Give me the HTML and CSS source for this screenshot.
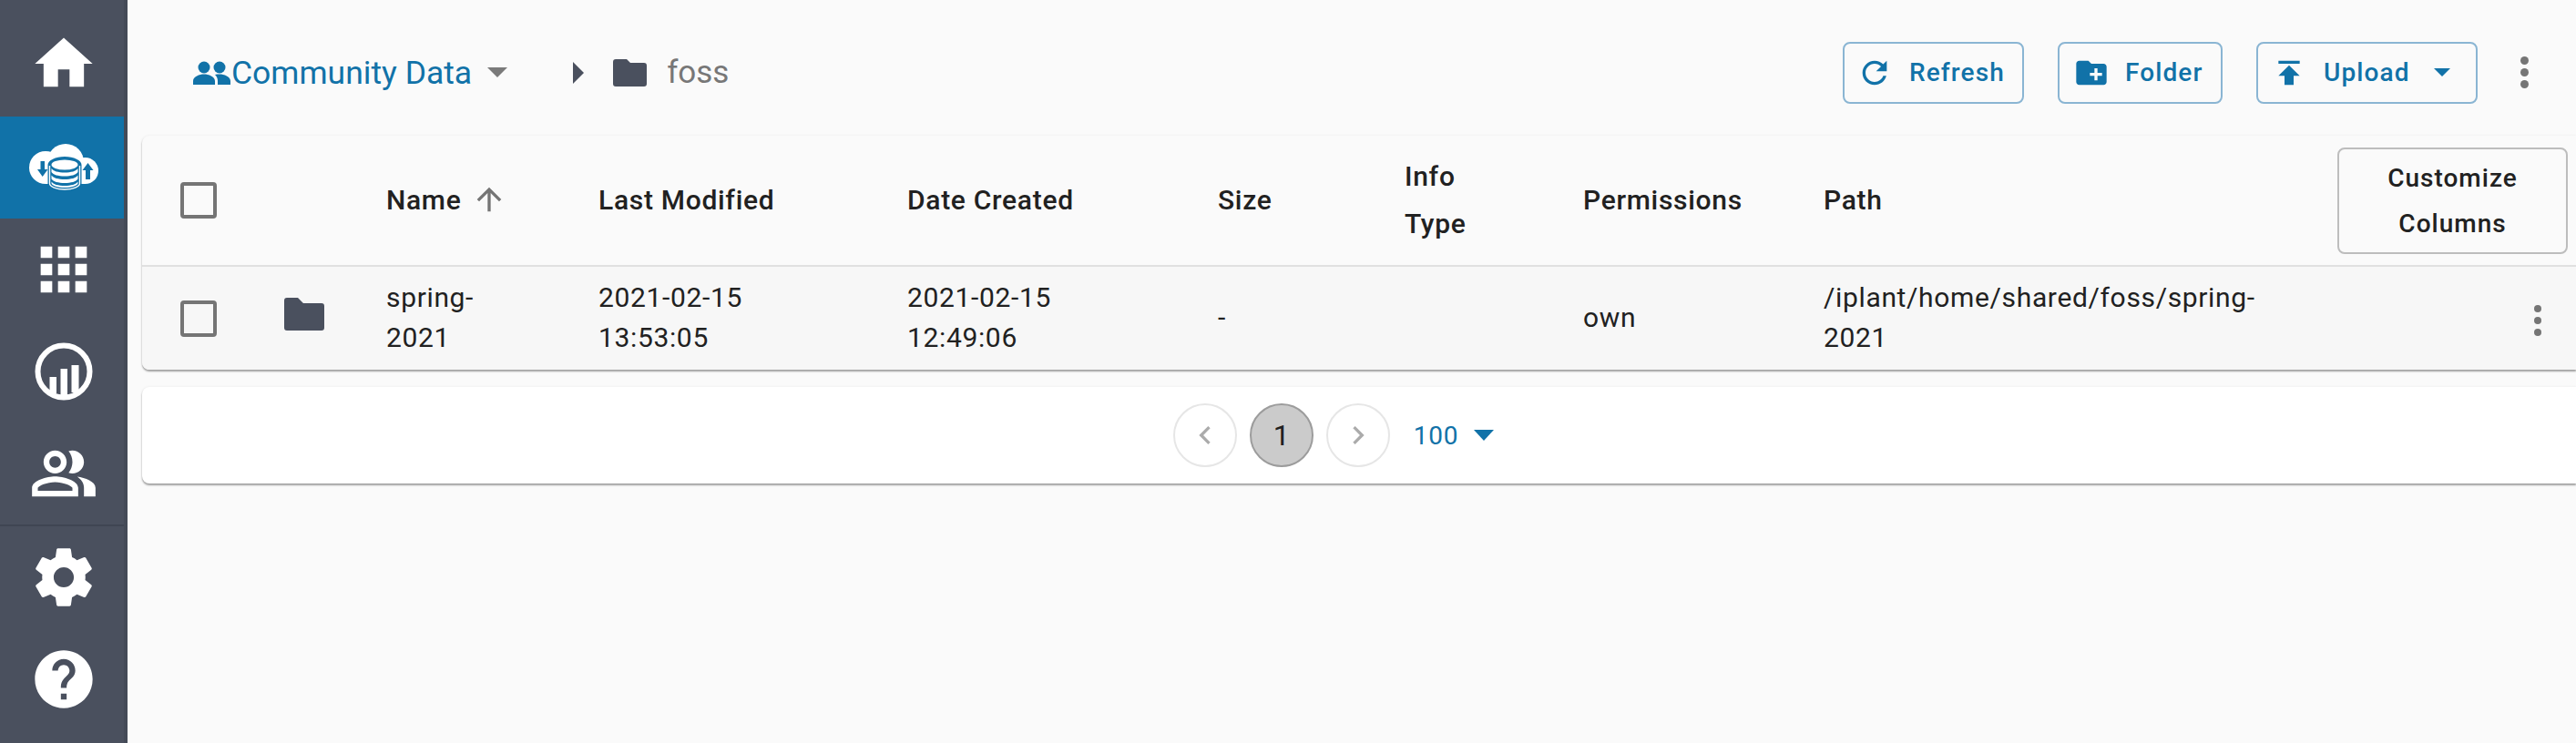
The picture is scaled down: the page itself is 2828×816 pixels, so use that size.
FILE: index.html
```html
<!DOCTYPE html>
<html lang="en">
<head>
    <meta charset="UTF-8">
    <meta name="viewport" content="width=device-width, initial-scale=1.0">
    <title>Community Data</title>
    <link rel="stylesheet" href="styles.css">
</head>
<body>
    <!-- Side navigation -->
    <nav class="sidebar">
        <a href="#" class="nav-item nav-home">
            <svg class="nav-icon" viewBox="0 0 24 24"><path d="M10 20v-6h4v6h5v-8h3L12 3 2 12h3v8z"/></svg>
        </a>
        <a href="#" class="nav-item active">
            <svg class="nav-data" viewBox="0 0 80 56">
                <circle cx="20" cy="28" r="18" fill="#fff"/>
                <circle cx="42" cy="22" r="20" fill="#fff"/>
                <circle cx="63.5" cy="31.5" r="14.5" fill="#fff"/>
                <rect x="20" y="30" width="44" height="16" fill="#fff"/>
                <path d="M14.500 21h4.500v9h3.500l-5.800 8-5.700-8h3.500z" fill="#1172a8"/>
                <path d="M64 41v-10h-3.500l6-8 6 8h-3.500v10z" fill="#1172a8"/>
                <path d="M22.500 25c0-5 8.500-9 18.500-9s18.500 4 18.500 9v21c0 5-8.500 9-18.500 9s-18.500-4-18.500-9z" fill="#1172a8"/>
                <path d="M24.500 26v19.500c0 3.500 7.500 6.500 16.500 6.500s16.500-3 16.500-6.500V26" fill="none" stroke="#fff" stroke-width="1.400"/>
                <ellipse cx="41" cy="25" rx="14.500" ry="5.500" fill="#fff"/>
                <path d="M26.500 29c2 3 7.500 4.500 14.500 4.500s12.500-1.500 14.500-4.500v4c-2 3-7.500 4.500-14.500 4.500s-12.500-1.500-14.500-4.500z" fill="#fff"/>
                <path d="M26.500 36.500c2 3 7.500 4.500 14.500 4.500s12.500-1.500 14.500-4.500v4c-2 3-7.500 4.500-14.500 4.500s-12.500-1.500-14.500-4.500z" fill="#fff"/>
                <path d="M26.500 43.500c2 3 7.500 4.500 14.500 4.500s12.500-1.500 14.500-4.500v2c-1 2.500-6.500 4.500-14.500 4.500s-13.500-2-14.500-4.500z" fill="#fff"/>
            </svg>
        </a>
        <a href="#" class="nav-item">
            <svg class="nav-icon" viewBox="0 0 24 24"><path d="M4 8h4V4H4v4zm6 12h4v-4h-4v4zm-6 0h4v-4H4v4zm0-6h4v-4H4v4zm6 0h4v-4h-4v4zm6-10v4h4V4h-4zm-6 4h4V4h-4v4zm6 6h4v-4h-4v4zm0 6h4v-4h-4v4z"/></svg>
        </a>
        <a href="#" class="nav-item">
            <svg class="nav-analytics" viewBox="0 0 66 66">
                <circle cx="33" cy="33" r="28.500" fill="none" stroke="#fff" stroke-width="6"/>
                <path d="M17.500 39H25v18h-7.500zM29.500 30H37v30h-7.500zM41.500 26H49.500v30h-8z" fill="#fff"/>
            </svg>
        </a>
        <a href="#" class="nav-item">
            <svg class="nav-icon" viewBox="0 0 24 24"><path d="M16.670 13.130C18.040 14.060 19 15.320 19 17v3h4v-3c0-2.180-3.570-3.470-6.330-3.870zM15 12c2.210 0 4-1.790 4-4s-1.790-4-4-4c-.47 0-.91.1-1.330.24C14.500 5.270 15 6.580 15 8s-.5 2.730-1.330 3.760c.42.14.86.24 1.330.24zM9 12c2.210 0 4-1.790 4-4s-1.790-4-4-4-4 1.790-4 4 1.790 4 4 4zm0-6c1.100 0 2 .9 2 2s-.9 2-2 2-2-.9-2-2 .9-2 2-2zM9 13c-2.670 0-8 1.340-8 4v3h16v-3c0-2.660-5.330-4-8-4zm6 5H3v-.99C3.200 16.290 6.300 15 9 15s5.800 1.290 6 2v1z"/></svg>
        </a>
        <div class="nav-divider"></div>
        <a href="#" class="nav-item">
            <svg class="nav-icon" viewBox="0 0 24 24"><path d="M19.430 12.980c.04-.32.07-.64.07-.98s-.03-.66-.07-.98l2.110-1.650c.19-.15.24-.42.12-.64l-2-3.460c-.12-.22-.39-.3-.61-.22l-2.490 1c-.52-.4-1.080-.73-1.690-.98l-.38-2.650C14.460 2.180 14.250 2 14 2h-4c-.25 0-.46.18-.49.42l-.38 2.650c-.61.25-1.170.59-1.690.98l-2.490-1c-.23-.09-.49 0-.61.22l-2 3.460c-.13.22-.07.49.12.64l2.110 1.650c-.04.32-.07.65-.07.98s.03.66.07.98l-2.110 1.650c-.19.15-.24.42-.12.64l2 3.460c.12.22.39.3.61.22l2.490-1c.52.4 1.080.73 1.690.98l.38 2.650c.03.24.24.42.49.42h4c.25 0 .46-.18.49-.42l.38-2.650c.61-.25 1.170-.59 1.690-.98l2.490 1c.23.09.49 0 .61-.22l2-3.460c.12-.22.07-.49-.12-.64l-2.110-1.650zM12 15.500c-1.930 0-3.500-1.570-3.500-3.500s1.570-3.500 3.500-3.500 3.500 1.570 3.500 3.500-1.570 3.500-3.500 3.500z"/></svg>
        </a>
        <a href="#" class="nav-item">
            <svg class="nav-icon" viewBox="0 0 24 24"><path d="M12 2C6.480 2 2 6.480 2 12s4.480 10 10 10 10-4.480 10-10S17.520 2 12 2zm1 17h-2v-2h2v2zm2.070-7.750l-.9.92C13.450 12.900 13 13.500 13 15h-2v-.5c0-1.100.45-2.100 1.170-2.830l1.240-1.260c.37-.36.59-.86.59-1.410 0-1.100-.9-2-2-2s-2 .9-2 2H8c0-2.210 1.790-4 4-4s4 1.790 4 4c0 .88-.36 1.680-.93 2.250z"/></svg>
        </a>
    </nav>

    <main class="content">
        <!-- Toolbar -->
        <div class="toolbar">
            <div class="crumbs">
                <svg class="group-icon" viewBox="0 0 41 26"><circle cx="12" cy="7" r="6.500"/><circle cx="29" cy="7" r="6.500"/><path d="M0 26v-4c0-5 7-7.500 12-7.500s12 2.500 12 7.500v4zM27 26v-4c0-3-1-5-3-7 1.500-.4 3.500-.5 5-.5 5 0 12 2.500 12 7.500v4z"/></svg>
                <span class="root-name">Community Data</span>
                <span class="caret caret-grey"></span>
                <span class="crumb-sep"></span>
                <svg class="crumb-folder" viewBox="0 0 37 30"><path d="M3 0h12l4 4h15a3 3 0 0 1 3 3v20a3 3 0 0 1-3 3H3a3 3 0 0 1-3-3V3a3 3 0 0 1 3-3z"/></svg>
                <span class="crumb-name">foss</span>
            </div>
            <div class="actions">
                <button class="btn btn-refresh">
                    <svg class="btn-icon" viewBox="0 0 24 24"><path d="M17.650 6.350C16.200 4.900 14.210 4 12 4c-4.420 0-7.990 3.580-7.990 8s3.570 8 7.990 8c3.730 0 6.840-2.550 7.730-6h-2.080c-.82 2.330-3.040 4-5.650 4-3.310 0-6-2.690-6-6s2.690-6 6-6c1.660 0 3.140.69 4.220 1.780L13 11h7V4l-2.350 2.350z"/></svg>
                    Refresh
                </button>
                <button class="btn btn-folder">
                    <svg class="btn-icon" viewBox="0 0 24 24"><path d="M20 6h-8l-2-2H4c-1.110 0-1.990.89-1.990 2L2 18c0 1.110.89 2 2 2h16c1.110 0 2-.89 2-2V8c0-1.110-.89-2-2-2zm-1 8h-3v3h-2v-3h-3v-2h3V9h2v3h3v2z"/></svg>
                    Folder
                </button>
                <button class="btn btn-upload">
                    <svg class="btn-icon" viewBox="0 0 24 24"><path d="M5 4v2h14V4H5zm0 10h4v6h6v-6h4l-7-7-7 7z"/></svg>
                    Upload
                    <span class="caret caret-small"></span>
                </button>
                <span class="dots dots-big"><i></i><i></i><i></i></span>
            </div>
        </div>

        <!-- Listing -->
        <div class="card listing">
            <table>
                <colgroup>
                    <col class="c-check"><col class="c-icon"><col class="c-name"><col class="c-mod"><col class="c-created"><col class="c-size"><col class="c-info"><col class="c-perm"><col class="c-path"><col class="c-end">
                </colgroup>
                <thead>
                    <tr>
                        <th><span class="check"></span></th>
                        <th></th>
                        <th>Name <svg class="sort-icon" viewBox="0 0 24 24"><path d="M4 12l1.410 1.410L11 7.830V20h2V7.830l5.580 5.590L20 12l-8-8-8 8z"/></svg></th>
                        <th>Last Modified</th>
                        <th>Date Created</th>
                        <th>Size</th>
                        <th>Info<br>Type</th>
                        <th>Permissions</th>
                        <th>Path</th>
                        <th class="end-cell"><button class="customize">Customize Columns</button></th>
                    </tr>
                </thead>
                <tbody>
                    <tr>
                        <td><span class="check"></span></td>
                        <td><svg class="row-folder" viewBox="0 0 44 36"><path d="M3 0h12l6 6h20a3 3 0 0 1 3 3v24a3 3 0 0 1-3 3H3a3 3 0 0 1-3-3V3a3 3 0 0 1 3-3z"/></svg></td>
                        <td class="cell-text">spring-<br>2021</td>
                        <td class="cell-text">2021-02-15<br>13:53:05</td>
                        <td class="cell-text">2021-02-15<br>12:49:06</td>
                        <td class="cell-text">-</td>
                        <td></td>
                        <td class="cell-text">own</td>
                        <td class="cell-text">/iplant/home/shared/foss/spring-<br>2021</td>
                        <td class="end-cell"><span class="dots"><i></i><i></i><i></i></span></td>
                    </tr>
                </tbody>
            </table>
        </div>

        <!-- Pagination -->
        <div class="card pager">
            <div class="pager-inner">
                <span class="page-btn"><svg viewBox="0 0 24 24"><path d="M15.410 7.410L14 6l-6 6 6 6 1.410-1.410L10.830 12z"/></svg></span>
                <span class="page-btn current">1</span>
                <span class="page-btn"><svg viewBox="0 0 24 24"><path d="M10 6L8.590 7.410 13.170 12l-4.580 4.590L10 18l6-6z"/></svg></span>
                <span class="page-size">100</span>
                <span class="caret caret-blue"></span>
            </div>
        </div>
    </main>
</body>
</html>
```

FILE: styles.css
```css
/* Global styles */
html, body {
    height: 100%;
}

body {
    display: flex;
    margin: 0;
    overflow: hidden;
    background-color: #fafafa;
    color: #212121;
    font-family: Roboto, "Liberation Sans", sans-serif;
    font-size: 30px;
}

/* Side navigation */
.sidebar {
    flex: none;
    box-sizing: border-box;
    width: 140px;
    border-right: 4px solid #444a57;
    background-color: #4a505e;
}

.nav-item {
    display: flex;
    align-items: center;
    justify-content: center;
    box-sizing: border-box;
    height: 112px;
    padding-left: 4px;
    fill: #fff;
}

.nav-home {
    height: 128px;
    padding-top: 12px;
}

.nav-item.active {
    background-color: #1172a8;
}

.nav-icon {
    width: 76px;
    height: 76px;
}

.nav-data {
    width: 80px;
    height: 56px;
}

.nav-analytics {
    width: 66px;
    height: 66px;
}

.nav-divider {
    height: 2px;
    background-color: #3f4552;
}

/* Main area */
.content {
    flex: 1;
    min-width: 0;
    padding-left: 16px;
}

.toolbar {
    display: flex;
    align-items: center;
    justify-content: space-between;
    box-sizing: border-box;
    height: 149px;
    padding-top: 10px;
}

.crumbs {
    display: flex;
    align-items: center;
    padding-left: 56px;
}

.group-icon {
    width: 41px;
    height: 26px;
    margin-right: 1px;
    fill: #1172a8;
}

.root-name {
    color: #1172a8;
    font-size: 35.5px;
}

.caret {
    display: inline-block;
    width: 0;
    height: 0;
    border-style: solid;
    border-color: transparent;
}

.caret-grey {
    margin-left: 17px;
    border-width: 11px 11px 0;
    border-top-color: #7a7a7a;
}

.caret-blue {
    border-width: 12px 11px 0;
    border-top-color: #1172a8;
}

.caret-small {
    margin-left: 8px;
    border-width: 9px 9px 0;
    border-top-color: #1172a8;
}

.crumb-sep {
    margin-left: 72px;
    border-style: solid;
    border-width: 12px 0 12px 12px;
    border-color: transparent transparent transparent #4a505e;
}

.crumb-folder {
    width: 37px;
    height: 30px;
    margin-left: 32px;
    fill: #4a505e;
}

.crumb-name {
    margin-left: 22px;
    color: #777;
    font-size: 35px;
}

.actions {
    display: flex;
    align-items: center;
    padding-right: 54px;
}

.btn {
    display: flex;
    align-items: center;
    box-sizing: border-box;
    height: 68px;
    border: 2px solid #8ab5d3;
    border-radius: 8px;
    background: transparent;
    color: #1172a8;
    font-family: inherit;
    font-size: 28px;
    font-weight: 500;
    letter-spacing: 1.1px;
}

.btn-icon {
    width: 40px;
    height: 40px;
    fill: #1172a8;
}

.btn-refresh {
    width: 199px;
    padding: 0 0 0 13px;
    gap: 18px;
}

.btn-folder {
    width: 181px;
    margin-left: 37px;
    padding: 0 0 0 15px;
    gap: 17px;
}

.btn-upload {
    width: 243px;
    margin-left: 37px;
    padding: 0 0 0 14px;
    gap: 18px;
}

.dots {
    display: inline-flex;
    flex-direction: column;
    gap: 5px;
}

.dots i {
    width: 8px;
    height: 8px;
    border-radius: 50%;
    background-color: #757575;
}

.dots-big {
    margin-left: 47px;
    margin-right: -2px;
    gap: 4px;
}

.dots-big i {
    width: 9px;
    height: 9px;
}

/* Cards */
.card {
    border-radius: 8px 0 0 8px;
    box-shadow: 0 2px 2px 0 rgba(0, 0, 0, 0.35), 0 0 3px 0 rgba(0, 0, 0, 0.07);
}

.listing {
    overflow: hidden;
    background-color: #fafafa;
}

/* Table */
table {
    width: 100%;
    border-collapse: collapse;
    table-layout: fixed;
}

.c-check { width: 134px; }
.c-icon { width: 118px; }
.c-name { width: 233px; }
.c-mod { width: 339px; }
.c-created { width: 341px; }
.c-size { width: 205px; }
.c-info { width: 196px; }
.c-perm { width: 264px; }
.c-path { width: 564px; }

th, td {
    padding: 0 0 0 16px;
    text-align: left;
}

th {
    height: 142px;
    border-bottom: 2px solid #e0e0e0;
    font-weight: 500;
    line-height: 52px;
    letter-spacing: 0.7px;
}

td {
    height: 113px;
    background-color: #f7f7f7;
    font-weight: 400;
    line-height: 44px;
    letter-spacing: 0.65px;
}

td.cell-text {
    height: 111px;
    padding-bottom: 2px;
}

th:first-child, td:first-child {
    padding-left: 42px;
}

th:nth-child(2), td:nth-child(2) {
    padding-left: 22px;
}

.check {
    display: block;
    box-sizing: border-box;
    width: 40px;
    height: 40px;
    border: 4px solid #757575;
    border-radius: 4px;
}

.row-folder {
    display: block;
    width: 44px;
    height: 36px;
    margin-top: -10px;
    fill: #4a505e;
}

.sort-icon {
    width: 40px;
    height: 40px;
    margin-left: 2px;
    vertical-align: -9px;
    fill: #757575;
}

.customize {
    box-sizing: border-box;
    display: block;
    width: 253px;
    height: 117px;
    margin-top: 1px;
    padding: 0 40px;
    border: 2px solid #bdbdbd;
    border-radius: 8px;
    background: transparent;
    color: #212121;
    font-family: inherit;
    font-size: 28px;
    font-weight: 500;
    line-height: 50px;
    letter-spacing: 1px;
}

.end-cell .dots {
    margin-left: 216px;
    vertical-align: middle;
}

/* Pagination */
.pager {
    display: flex;
    justify-content: center;
    height: 106px;
    margin-top: 19px;
    background-color: #fff;
}

.pager-inner {
    display: flex;
    align-items: center;
    gap: 14px;
    padding-right: 56px;
}

.page-btn {
    display: flex;
    align-items: center;
    justify-content: center;
    box-sizing: border-box;
    width: 70px;
    height: 70px;
    border: 2px solid #e6e6e6;
    border-radius: 50%;
    font-size: 32px;
}

.page-btn svg {
    width: 40px;
    height: 40px;
    fill: #ababab;
}

.page-btn.current {
    border-color: #9c9c9c;
    background-color: #cbcbcb;
}

.page-size {
    margin-left: 12px;
    color: #1172a8;
    font-size: 28px;
    letter-spacing: 0.8px;
}

.pager-inner .caret {
    margin-left: 3px;
}
```
